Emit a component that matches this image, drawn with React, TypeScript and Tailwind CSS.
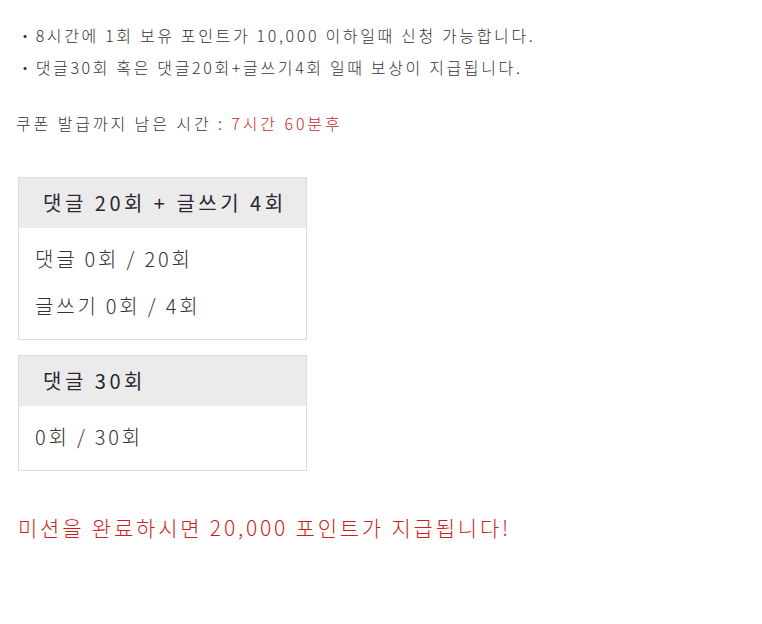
const font = { fontFamily: '"Noto Sans CJK KR", "Noto Sans", sans-serif' };

function MissionBox({ title, rows }: { title: string; rows: string[] }) {
  return (
    <div className="w-[289px] border border-[#dcdcdc] bg-white">
      <div className="h-[50px] bg-[#ebebeb] pl-[24px] flex items-center text-[20px] tracking-[3.5px] text-[#2b2633]">
        {title}
      </div>
      <div className="pl-[16px] pt-[17px] pb-[19px] flex flex-col gap-[19px] text-[20px] tracking-[2.8px] font-light text-[#333]">
        {rows.map((r) => (
          <div key={r} className="leading-[28px]">
            {r}
          </div>
        ))}
      </div>
    </div>
  );
}

export default function App() {
  return (
    <div className="w-[762px] h-[624px] bg-white" style={font}>
      <div className="pt-[24px] pl-[17px] text-[16px] tracking-[2.65px] text-[#333] font-light">
        <div className="flex flex-col gap-[9px] leading-[23px]">
          <div>・8시간에 1회 보유 포인트가 10,000 이하일때 신청 가능합니다.</div>
          <div>・댓글30회 혹은 댓글20회+글쓰기4회 일때 보상이 지급됩니다.</div>
        </div>
        <div className="mt-[33px] leading-[23px] -ml-[1px] tracking-[2.9px]">
          쿠폰 발급까지 남은 시간 : <span className="text-[#cc1f1f]">7시간 60분후</span>
        </div>
      </div>
      <div className="pl-[18px] mt-[42px] flex flex-col gap-[15px]">
        <MissionBox title="댓글 20회 + 글쓰기 4회" rows={["댓글 0회 / 20회", "글쓰기 0회 / 4회"]} />
        <MissionBox title="댓글 30회" rows={["0회 / 30회"]} />
      </div>
      <div className="pl-[18px] mt-[42px] text-[21px] tracking-[2.8px] font-light text-[#cc1f1f] leading-[28px]">
        미션을 완료하시면 20,000 포인트가 지급됩니다!
      </div>
    </div>
  );
}
